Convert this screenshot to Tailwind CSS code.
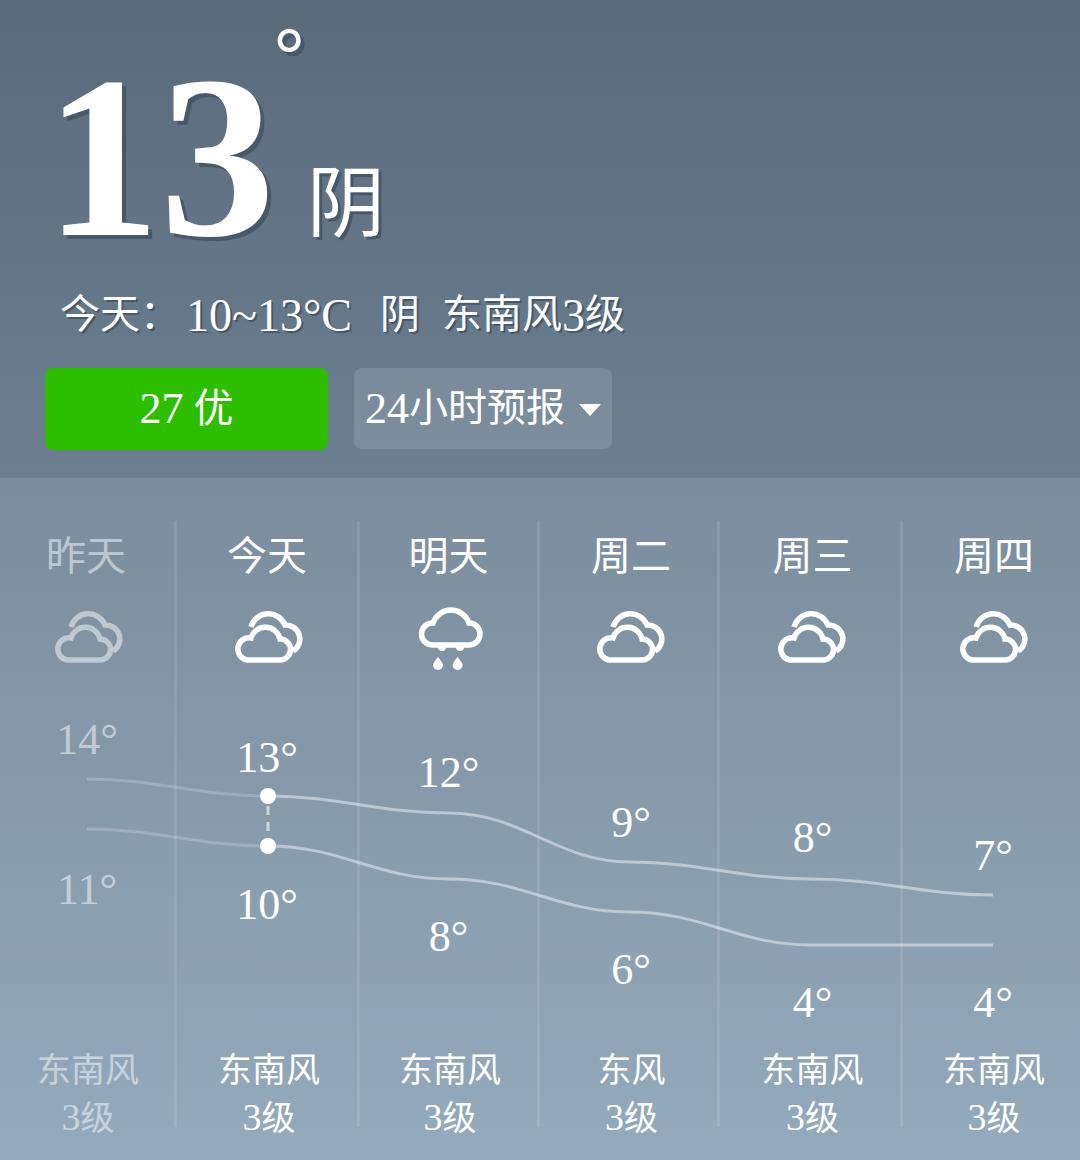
<!DOCTYPE html>
<html lang="zh-CN">
<head>
    <meta charset="UTF-8">
    <meta name="viewport" content="width=device-width, initial-scale=1.0">
    <title>天气</title>
    <script src="https://cdn.jsdelivr.net/npm/@tailwindcss/browser@4"></script>
</head>
<body class="font-['Liberation_Serif','Noto_Sans_CJK_SC',serif] text-white">
    <div class="relative w-[1080px] h-[1160px] overflow-hidden bg-linear-to-b from-[#596a7b] to-[#88a1b5]">
        <!-- Current weather -->
        <section class="h-[478px] pl-[45px] pt-[43px] [text-shadow:4px_4px_0_#46586a]">
            <div class="flex items-baseline h-[232px] leading-none">
                <span class="relative text-[230px] font-bold">13<span class="absolute left-[229px] top-[-27px] text-[76px] leading-none">°</span></span>
                <span class="ml-[32px] text-[78px] -translate-y-[4px] [text-shadow:3px_3px_0_#46586a]">阴</span>
            </div>
            <p class="mt-[10px] ml-[15px] h-[60px] flex items-center text-[40px] whitespace-pre [text-shadow:2px_2px_0_#46586a]">今天：<span class="ml-[6px] text-[46px]">10~13°C</span><span class="ml-[28px]">阴</span><span class="ml-[22px]">东南风</span><span class="text-[46px]">3</span>级</p>
            <div class="flex mt-[23px] gap-[26px] [text-shadow:none]">
                <div class="w-[283px] h-[82px] rounded-lg bg-[#2dbe00] flex items-center justify-center text-[40px]"><span class="text-[44px]">27</span>&nbsp;优</div>
                <div class="w-[258px] h-[81px] rounded-lg bg-white/12 flex items-center pl-[11px] text-[39px]">
                    <span class="text-[44px]">24</span>小时预报
                    <span class="ml-[14px] mt-[2px] w-0 h-0 border-x-[11px] border-x-transparent border-t-[12px] border-t-white"></span>
                </div>
            </div>
        </section>

        <!-- Forecast -->
        <section class="relative h-[682px] pt-[43px] bg-white/10">
            <div class="grid grid-cols-[177px_183px_180px_180px_183px_177px] grid-rows-[606px]">
                <div class="border-r-[3px] border-white/10">
                    <div class="opacity-50">
                        <div class="h-[72px] pr-[2px] flex items-center justify-center text-[40px]">昨天</div>
                        <svg class="mt-[17px] mb-[11px] mx-auto" width="72" height="56" viewBox="0 0 72 56" fill="none" stroke="#fff" stroke-width="5.5"><path d="M16 50H49A10.5 10.5 0 0 0 49 29A15 15 0 0 0 20 28A11 11 0 0 0 16 50Z"/><path d="M20 17A18 18 0 0 1 54 15A14 14 0 0 1 62 41"/></svg>
                        <div class="relative h-[369px] text-center text-[44px] leading-none">
                            <span class="absolute inset-x-0 -translate-y-1/2" style="top:63px">14°</span>
                            <span class="absolute inset-x-0 -translate-y-1/2" style="top:213px">11°</span>
                        </div>
                        <div class="pt-[1px] pl-[2px] text-center text-[34px] leading-[47px]">东南风<br><span class="text-[38px]">3</span>级</div>
                    </div>
                </div>
                <div class="border-r-[3px] border-white/10">
                    <div class="h-[72px] flex items-center justify-center text-[40px]">今天</div>
                    <svg class="mt-[17px] mb-[11px] mx-auto" width="72" height="56" viewBox="0 0 72 56" fill="none" stroke="#fff" stroke-width="5.5"><path d="M16 50H49A10.5 10.5 0 0 0 49 29A15 15 0 0 0 20 28A11 11 0 0 0 16 50Z"/><path d="M20 17A18 18 0 0 1 54 15A14 14 0 0 1 62 41"/></svg>
                    <div class="relative h-[369px] pl-[2px] text-center text-[44px] leading-none">
                        <span class="absolute inset-x-0 -translate-y-1/2" style="top:81px">13°</span>
                        <span class="absolute inset-x-0 -translate-y-1/2" style="top:228px">10°</span>
                    </div>
                    <div class="pt-[1px] pl-[4px] text-center text-[34px] leading-[47px]">东南风<br><span class="text-[38px]">3</span>级</div>
                </div>
                <div class="border-r-[3px] border-white/10">
                    <div class="h-[72px] flex items-center justify-center text-[40px]">明天</div>
                    <svg class="mt-[12px] mx-auto" width="72" height="72" viewBox="0 0 72 72" fill="none" stroke="#fff" stroke-width="5.5"><path d="M19 40H56A11 11 0 0 0 56 18A19 19 0 0 0 20 18A11 11 0 0 0 19 40Z"/><g fill="#fff" stroke="none"><path d="M25 42h8a4 4 0 0 1-8 0ZM43 42h8a4 4 0 0 1-8 0Z"/><path d="M25 52C25 52 20 58 20 60A5 5 0 0 0 30 60C30 58 25 52 25 52Z"/><path d="M44.6 52C44.6 52 39.6 58 39.6 60A5 5 0 0 0 49.6 60C49.6 58 44.6 52 44.6 52Z"/></g></svg>
                    <div class="relative h-[369px] text-center text-[44px] leading-none">
                        <span class="absolute inset-x-0 -translate-y-1/2" style="top:96px">12°</span>
                        <span class="absolute inset-x-0 -translate-y-1/2" style="top:260px">8°</span>
                    </div>
                    <div class="pt-[1px] pl-[3px] text-center text-[34px] leading-[47px]">东南风<br><span class="text-[38px]">3</span>级</div>
                </div>
                <div class="border-r-[3px] border-white/10">
                    <div class="h-[72px] pl-[5px] flex items-center justify-center text-[40px]">周二</div>
                    <svg class="mt-[17px] mb-[11px] mx-auto" width="72" height="56" viewBox="0 0 72 56" fill="none" stroke="#fff" stroke-width="5.5"><path d="M16 50H49A10.5 10.5 0 0 0 49 29A15 15 0 0 0 20 28A11 11 0 0 0 16 50Z"/><path d="M20 17A18 18 0 0 1 54 15A14 14 0 0 1 62 41"/></svg>
                    <div class="relative h-[369px] text-center text-[44px] leading-none">
                        <span class="absolute left-[5px] right-0 -translate-y-1/2" style="top:146px">9°</span>
                        <span class="absolute left-[5px] right-0 -translate-y-1/2" style="top:293px">6°</span>
                    </div>
                    <div class="pt-[1px] pl-[6px] text-center text-[34px] leading-[47px]">东风<br><span class="text-[38px]">3</span>级</div>
                </div>
                <div class="border-r-[3px] border-white/10">
                    <div class="h-[72px] pl-[5px] flex items-center justify-center text-[40px]">周三</div>
                    <svg class="mt-[17px] mb-[11px] mx-auto" width="72" height="56" viewBox="0 0 72 56" fill="none" stroke="#fff" stroke-width="5.5"><path d="M16 50H49A10.5 10.5 0 0 0 49 29A15 15 0 0 0 20 28A11 11 0 0 0 16 50Z"/><path d="M20 17A18 18 0 0 1 54 15A14 14 0 0 1 62 41"/></svg>
                    <div class="relative h-[369px] text-center text-[44px] leading-none">
                        <span class="absolute left-[5px] right-0 -translate-y-1/2" style="top:161px">8°</span>
                        <span class="absolute left-[5px] right-0 -translate-y-1/2" style="top:326px">4°</span>
                    </div>
                    <div class="pt-[1px] pl-[5px] text-center text-[34px] leading-[47px]">东南风<br><span class="text-[38px]">3</span>级</div>
                </div>
                <div>
                    <div class="h-[72px] pl-[5px] flex items-center justify-center text-[40px]">周四</div>
                    <svg class="mt-[17px] mb-[11px] mx-auto" width="72" height="56" viewBox="0 0 72 56" fill="none" stroke="#fff" stroke-width="5.5"><path d="M16 50H49A10.5 10.5 0 0 0 49 29A15 15 0 0 0 20 28A11 11 0 0 0 16 50Z"/><path d="M20 17A18 18 0 0 1 54 15A14 14 0 0 1 62 41"/></svg>
                    <div class="relative h-[369px] text-center text-[44px] leading-none">
                        <span class="absolute left-[3px] right-0 -translate-y-1/2" style="top:179px">7°</span>
                        <span class="absolute left-[3px] right-0 -translate-y-1/2" style="top:326px">4°</span>
                    </div>
                    <div class="pt-[1px] pl-[5px] text-center text-[34px] leading-[47px]">东南风<br><span class="text-[38px]">3</span>级</div>
                </div>
            </div>

            <!-- Temperature curves, viewBox uses page coordinates -->
            <svg class="absolute left-0 top-0 pointer-events-none" width="1080" height="682" viewBox="0 478 1080 682" fill="none">
                <g stroke="#fff" stroke-width="3" stroke-opacity="0.2">
                    <path d="M87 779C160 779 195 796 268 796"/>
                    <path d="M87 829C160 829 195 846 268 846"/>
                </g>
                <g stroke="#fff" stroke-width="3" stroke-opacity="0.45">
                    <path d="M268 796C341 796 376 813 449 813C522 813 557 862 630 862C703 862 738 879 811 879C884 879 920 895 993 895"/>
                    <path d="M268 846C341 846 376 879 449 879C522 879 557 912 630 912C703 912 738 945 811 945C884 945 920 945 993 945"/>
                </g>
                <line x1="268" y1="806" x2="268" y2="838" stroke="#fff" stroke-opacity="0.6" stroke-width="3" stroke-dasharray="9 7"/>
                <circle cx="268" cy="796" r="8" fill="#fff"/>
                <circle cx="268" cy="846" r="8" fill="#fff"/>
            </svg>
        </section>
    </div>
</body>
</html>
